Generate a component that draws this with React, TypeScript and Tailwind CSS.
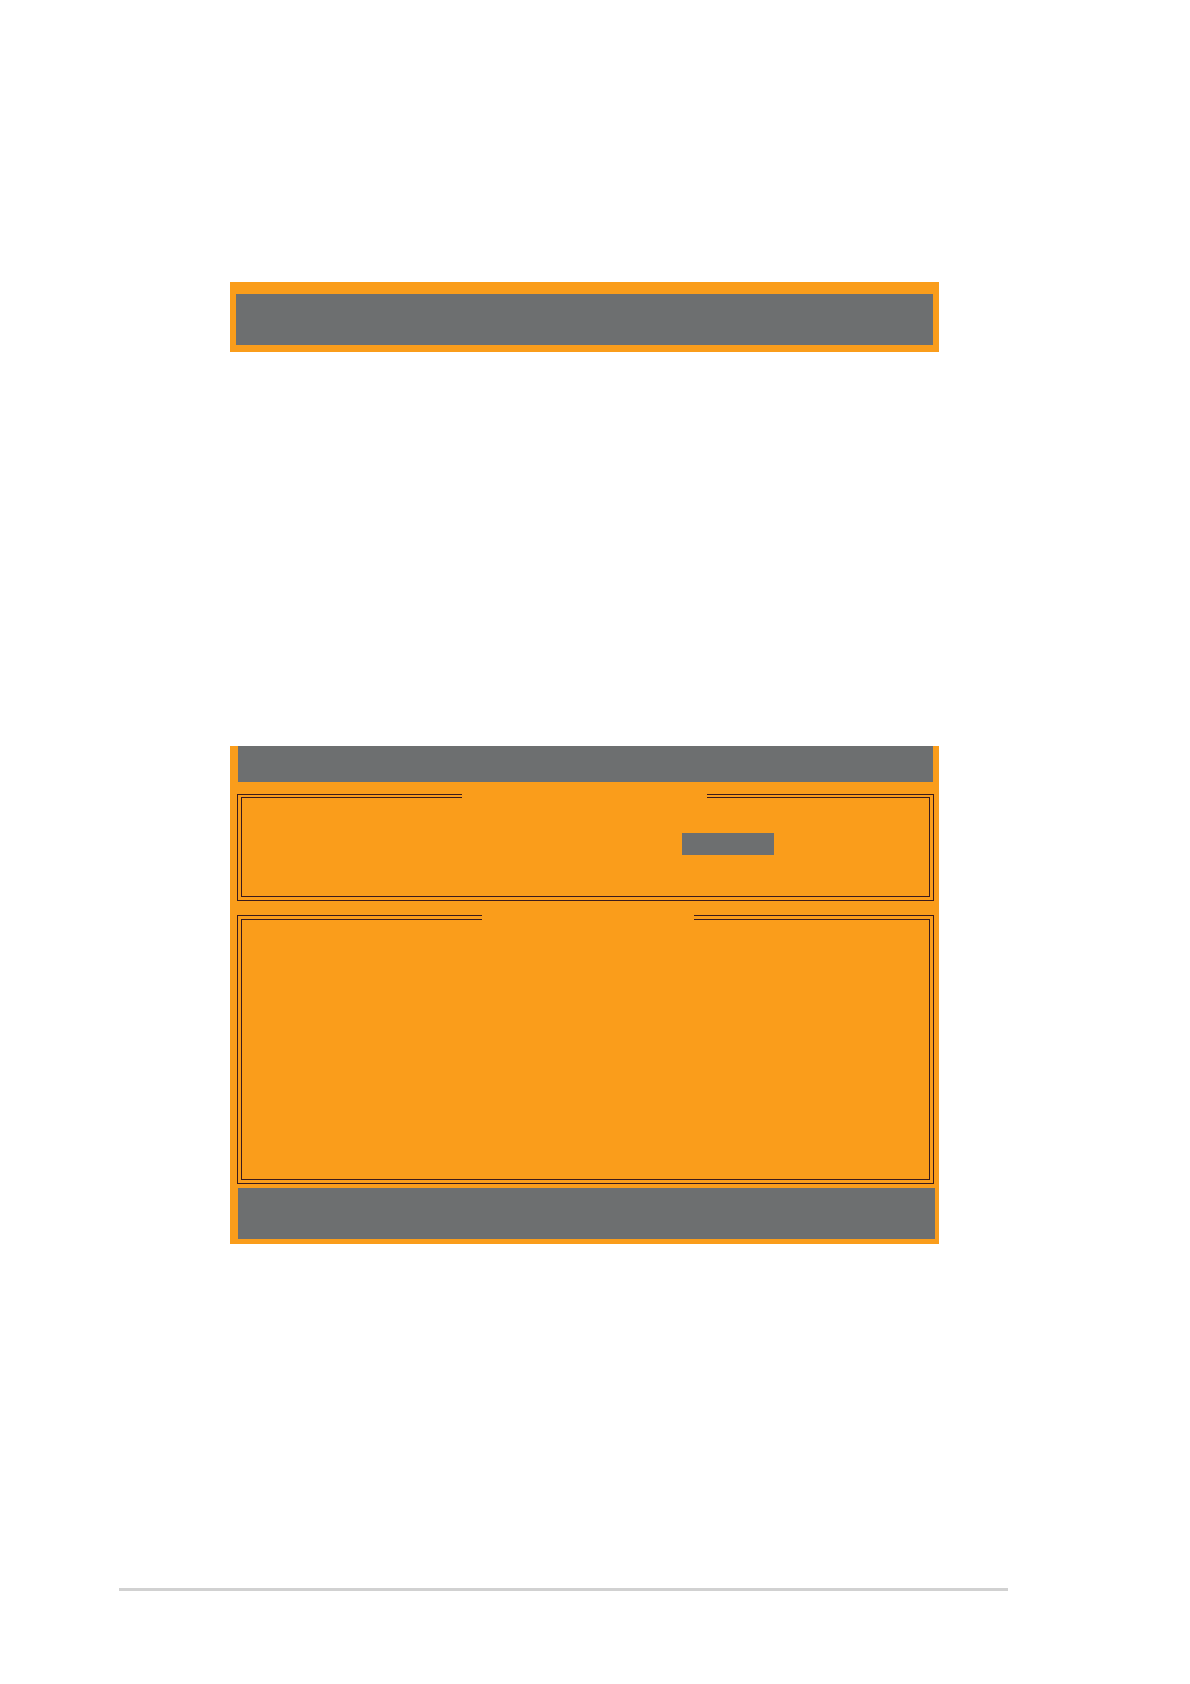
import React from "react";

const App = () => {
    return (
        <div className="min-h-screen bg-white pt-[282px] pb-[93px]">
            <main className="ml-[230px] mr-[251px]">
                <section className="bg-[#fa9d1b] pt-3 px-1.5 pb-[7px]">
                    <div className="h-[51px] bg-[#6d6f70]" />
                </section>

                <section className="mt-[394px] bg-[#fa9d1b] pb-[5px]">
                    <div className="ml-2 mr-1.5 h-9 bg-[#6d6f70]" />
                    <div className="mt-3 ml-[7px] mr-[5px]">
                        <Frame
                            padding="pt-[2px] px-[3px] pb-[3px]"
                            gap="left-[224px] w-[245px]"
                        >
                            <div className="h-[98px] pt-[35px]">
                                <div className="ml-[440px] w-[92px] h-[22px] bg-[#6d6f70]" />
                            </div>
                        </Frame>
                        <div className="h-3.5" />
                        <Frame padding="p-[3px]" gap="left-[244px] w-[212px]">
                            <div className="h-[259px]" />
                        </Frame>
                    </div>
                    <div className="mt-1 ml-2 mr-1 h-[51px] bg-[#6d6f70]" />
                </section>
            </main>
            <hr className="mt-[344px] ml-[119px] mr-[182px] h-[3px] border-0 bg-[#d1d1d1]" />
        </div>
    );
};

export default App;

function Frame({ padding, gap, children }: any) {
    return (
        <div className={"relative border border-[#3a1a1c] " + padding}>
            <div className={"absolute -top-px h-1.5 bg-[#fa9d1b] " + gap} />
            <div className="border border-[#3a1a1c]">{children}</div>
        </div>
    );
}
